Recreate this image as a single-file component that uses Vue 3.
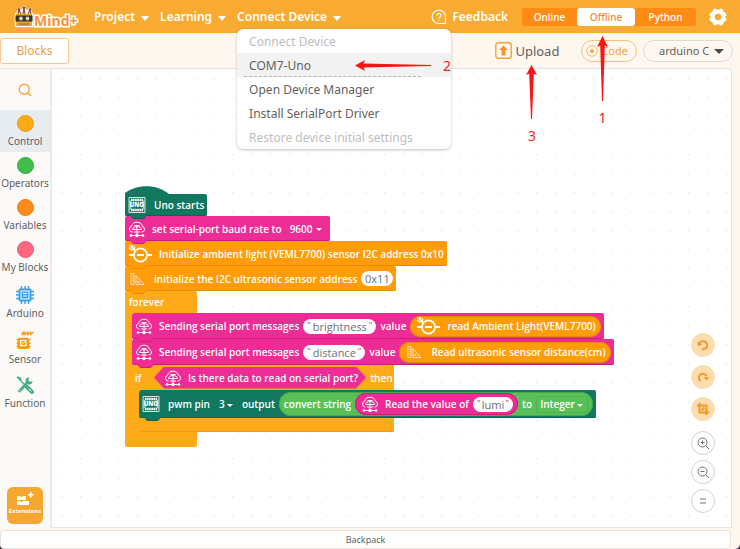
<script setup>
import { ref } from 'vue'

const mode = ref('Offline')
const modes = ['Online', 'Offline', 'Python']
const baud = ref('9600')
const pin = ref('3')
const castType = ref('Integer')
const language = ref('arduino C')
const address = ref('0x11')
const firstKey = ref('brightness')
const secondKey = ref('distance')
const readKey = ref('lumi')

const categories = [
  { name: 'Control', tone: 'amber' },
  { name: 'Operators', tone: 'green' },
  { name: 'Variables', tone: 'orange' },
  { name: 'My Blocks', tone: 'rose' },
]
</script>

<template>
  <div class="app">
    <svg class="defs" aria-hidden="true">
      <symbol id="i-iot" viewBox="0 0 18 18">
        <g fill="none" stroke="#fff" stroke-width="1">
          <path d="M4.500 12H3.800a2.900 2.900 0 0 1-.3-5.600A5.700 5.700 0 0 1 14.500 6.400 2.900 2.900 0 0 1 14.200 12h-.7" />
          <path d="M4.500 9.500c0-4 9-4 9 0zM6.500 5.500h5M9 5.500v6M6 12h6" />
          <path d="M9 12v3.500M3 15.500h12" />
        </g>
        <g fill="#fff"><circle cx="9" cy="15.500" r="1.700" /><circle cx="3" cy="15.500" r="1.300" /><circle cx="15" cy="15.500" r="1.300" /></g>
      </symbol>
      <symbol id="i-board" viewBox="0 0 18 18">
        <path d="M1 1.500h16v15H1z" fill="none" stroke="#fff" stroke-width="1" opacity=".8" />
        <path d="M3 4h12M3 14h12" stroke="#fff" stroke-width="2.400" stroke-dasharray="1.600 .5" />
        <path d="M1.500 4.500h2v9h-2zM14.500 4.500h2v9h-2z" fill="#fff" opacity=".6" />
      </symbol>
      <symbol id="i-light" viewBox="0 0 24 20">
        <g fill="none" stroke="#fff">
          <circle cx="12.500" cy="11" r="6.600" stroke-width="1.800" />
          <path d="M1 11h5M19 11h5M9 11h7" stroke-width="1.800" />
          <path d="M1.500 1.500l5 4.500M6.500 2.500V6H3M3.500 1l2 2M1 4l2 1.500" stroke-width="1.200" />
        </g>
      </symbol>
      <symbol id="i-ruler" viewBox="0 0 18 16">
        <g fill="none" stroke="#ffe2b5" stroke-width="1">
          <path d="M3 2.500h3v11H3zM4.500 5H6M4.500 7.500H6M4.500 10H6" />
          <path d="M8 4.500l8 9H8zM10 10l1.500 1.700H10z" />
        </g>
      </symbol>
    </svg>

    <header class="topbar">
      <svg class="logo" viewBox="0 0 68 24" role="img" aria-label="Mind+">
        <g stroke="#fff" stroke-width="2.500" stroke-linejoin="round" fill="#fff"><path d="M4 9h16v12H4zM6 8l1-4 3 4 2-6 2 6 4-4 1 4z" /></g>
        <path d="M4 9h16v12H4z" fill="#e9a52d" />
        <path d="M6 9l1-4 2 4M11 9l1-6 1 6M16 9l2-4 1 4" fill="none" stroke="#8d563a" stroke-width="1.300" />
        <circle cx="7" cy="4.500" r="1.300" fill="#7b4a38" /><circle cx="12" cy="2.800" r="1.400" fill="#7b4a38" /><circle cx="18" cy="4.500" r="1.300" fill="#7b4a38" />
        <path d="M3.500 10.500h17v6h-17z" fill="#38302c" /><circle cx="9" cy="13.500" r="1.900" fill="#d7d2b3" /><circle cx="15.500" cy="13.500" r="1.900" fill="#d7d2b3" />
        <path d="M7 19h10" stroke="#8d642a" />
        <text x="22" y="21" class="logo-text">Mind+</text>
      </svg>
      <nav class="menus">
        <button class="menu-btn">Project<i class="caret"></i></button>
        <button class="menu-btn">Learning<i class="caret"></i></button>
        <div class="menu-wrap">
          <button class="menu-btn" aria-expanded="true">Connect Device<i class="caret"></i></button>
          <div class="dropdown">
            <button class="entry" disabled>Connect Device</button>
            <button class="entry active">COM7-Uno</button>
            <button class="entry">Open Device Manager</button>
            <button class="entry">Install SerialPort Driver</button>
            <button class="entry" disabled>Restore device initial settings</button>
            <div class="mark mark-side">
              <svg width="76" height="11" viewBox="0 0 76 11"><path d="M0 5.500L10 0 8.500 3.500 76 5v1L8.500 7.500 10 11z" fill="#fb1414" /></svg>
              <span>2</span>
            </div>
          </div>
        </div>
      </nav>
      <button class="feedback">
        <svg width="16" height="16" viewBox="0 0 16 16" fill="none" stroke="#fff" stroke-width="1.200">
          <path d="M14.500 14.500H8A6.700 6.700 0 1 1 14.500 8z" />
          <path d="M6 6.500a2 2 0 1 1 2.800 1.800q-.8.400-.8 1.200M8 10.700v1.200" />
        </svg>
        Feedback
      </button>
      <div class="modes">
        <button v-for="m in modes" :key="m" class="mode" :class="{ on: m === mode }" @click="mode = m">{{ m }}</button>
        <div class="mark mark-up mark-mode">
          <svg width="11" height="65" viewBox="0 0 11 65"><path d="M5.500 0L11 11 7.800 9.500 6 65H5L3.200 9.500 0 11z" fill="#fb1414" /></svg>
          <span>1</span>
        </div>
      </div>
      <button class="gear" aria-label="Settings">
        <svg width="20" height="20" viewBox="0 0 20 20">
          <path fill-rule="evenodd" fill="#fff" d="M6.500 1.500Q8 1.500 10 3q2-1.500 3.500-1.500 2 .7 2 3.200 2.500 1 3 2.300Q19 8.500 17 10q2 1.500 1.500 3-.5 1.300-3 2.300 0 2.500-2 3.200Q12 18.500 10 17q-2 1.500-3.500 1.500-2-.7-2-3.200-2.500-1-3-2.300Q1 11.500 3 10 1 8.500 1.500 7q.5-1.300 3-2.300 0-2.500 2-3.200zM10 6.800a3.200 3.200 0 1 0 0 6.400 3.200 3.200 0 0 0 0-6.400z" />
        </svg>
      </button>
    </header>

    <div class="toolbar">
      <button class="tab">Blocks</button>
      <div class="tools">
        <div class="upload-wrap">
          <button class="upload">
            <svg width="17" height="17" viewBox="0 0 17 17"><rect x=".8" y=".8" width="15.400" height="15.400" rx="2.500" fill="none" stroke="#f2a33a" stroke-width="1.400" /><path d="M8.500 3.500L13 8h-2.500v5.500h-4V8H4z" fill="#f2952a" /></svg>
            Upload
          </button>
          <div class="mark mark-up mark-upload">
            <svg width="11" height="54" viewBox="0 0 11 65" preserveAspectRatio="none"><path d="M5.500 0L11 12 7.800 10.500 6 65H5L3.200 10.500 0 12z" fill="#fb1414" /></svg>
            <span>3</span>
          </div>
        </div>
        <button class="code">
          <svg width="12" height="12" viewBox="0 0 12 12"><circle cx="6" cy="6" r="5.200" fill="none" stroke="#f2b763" /><circle cx="6" cy="6" r="2" fill="#f2a33a" /></svg>
          Code
        </button>
        <span class="language">
          <select v-model="language" aria-label="Code language"><option>arduino C</option></select>
        </span>
      </div>
    </div>

    <main class="main">
      <aside class="sidebar">
        <button class="search" aria-label="Search blocks">
          <svg width="14" height="14" viewBox="0 0 14 14" fill="none" stroke="#f5a83a" stroke-width="1.400"><circle cx="6.300" cy="6.300" r="5" /><path d="M9.800 9.800l3.200 3.200" /></svg>
        </button>
        <button v-for="(c, i) in categories" :key="c.name" class="cat" :class="{ selected: i === 0 }">
          <i class="dot" :class="c.tone"></i>{{ c.name }}
        </button>
        <button class="cat tall">
          <svg width="18" height="18" viewBox="0 0 18 18" fill="none" stroke="#39a0f4"><path d="M5.500 0v18M9 0v18M12.500 0v18M0 5.500h18M0 9h18M0 12.500h18" stroke-width="1.400" /><rect x="3" y="3" width="12" height="12" rx="1" fill="#39a0f4" /><rect x="5" y="5" width="8" height="8" fill="#39a0f4" stroke="#fff" /><path d="M7 7.500h4M7 10h4" stroke="#fff" /></svg>
          Arduino
        </button>
        <button class="cat tall">
          <svg width="18" height="19" viewBox="0 0 18 20"><path d="M5 4l2-3v3l2-3v3l3-3v3l3-3v3l3-3" fill="none" stroke="#fa9a1c" stroke-width="1.200" /><path d="M0 9h15M0 13h15M0 16.500h15" stroke="#fa9a1c" stroke-width="1.200" /><rect x="1" y="7" width="12.500" height="12" rx="2" fill="#fa9a1c" /><rect x="4.500" y="10" width="5.500" height="5.500" fill="none" stroke="#fff" stroke-width="1.200" /><path d="M6 14l3-3" stroke="#fff" /></svg>
          Sensor
        </button>
        <button class="cat tall">
          <svg width="18" height="18" viewBox="0 0 18 18" fill="none" stroke="#45b183"><path d="M2 2l9 9" stroke-width="1.400" /><path d="M1 1l3 1 .8 2.500" stroke-width="1.800" /><path d="M11 11l5 5" stroke-width="4" stroke-linecap="round" /><path d="M12 6l-8.500 9" stroke-width="3" stroke-linecap="round" /><path d="M13.500 1.500a3.500 3.500 0 1 0 3 3.500l-2.500 1-2-2z" fill="#45b183" stroke="none" /><path d="M12.800 12.800l2.500 2.500M3.500 14.800l1-1" stroke="#fff" /></svg>
          Function
        </button>
        <button class="extensions">
          <svg width="18" height="14" viewBox="0 0 18 14" fill="#fff"><path d="M1 4h3l1 1h1l1-1h3v4H1zM1 9h3l1 1h1l1-1h6v4H1zM14 0h1.500v2h2v1.500h-2v2H14v-2h-2V2h2z" /></svg>
          Extensions
        </button>
      </aside>

      <section class="canvas" aria-label="Script area">
        <div class="script">
          <div class="block teal hat">
            <svg class="hat-cap" width="44" height="9" viewBox="0 0 44 9"><path d="M0 9V7C12-2.300 32-2.300 44 8v1z" fill="#11775f" /></svg>
            <span class="board"><svg><use href="#i-board" /></svg><b>UNO</b></span>
            <span class="indent">Uno starts</span>
          </div>
          <div class="block pink">
            <svg class="ic"><use href="#i-iot" /></svg>
            <span>set serial-port baud rate to</span>
            <span class="pick"><select v-model="baud" aria-label="Baud rate"><option>9600</option></select></span>
          </div>
          <div class="block orange">
            <svg class="ic wide"><use href="#i-light" /></svg>
            <span>Initialize ambient light (VEML7700) sensor I2C address 0x10</span>
          </div>
          <div class="block orange">
            <svg class="ic"><use href="#i-ruler" /></svg>
            <span class="indent">initialize the I2C ultrasonic sensor address</span>
            <input v-model="address" class="field address" aria-label="Sensor address" />
          </div>
          <div class="loop">
            <div class="loop-head">forever</div>
            <div class="loop-body">
              <div class="block pink nested">
                <svg class="ic"><use href="#i-iot" /></svg>
                <span>Sending serial port messages</span>
                <label class="quoted"><i>"</i><input v-model="firstKey" class="w-long" aria-label="First message" /><i>"</i></label>
                <span>value</span>
                <div class="reporter orange"><svg class="ic wide"><use href="#i-light" /></svg><span>read Ambient Light(VEML7700)</span></div>
              </div>
              <div class="block pink nested">
                <svg class="ic"><use href="#i-iot" /></svg>
                <span>Sending serial port messages</span>
                <label class="quoted"><i>"</i><input v-model="secondKey" class="w-mid" aria-label="Second message" /><i>"</i></label>
                <span>value</span>
                <div class="reporter orange"><svg class="ic"><use href="#i-ruler" /></svg><span class="indent">Read ultrasonic sensor distance(cm)</span></div>
              </div>
              <div class="branch">
                <div class="branch-head">
                  <span class="if">if</span>
                  <div class="hex"><svg class="ic"><use href="#i-iot" /></svg><span>Is there data to read on serial port?</span></div>
                  <span>then</span>
                </div>
                <div class="branch-body">
                  <div class="block teal pwm">
                    <span class="board"><svg><use href="#i-board" /></svg><b>UNO</b></span>
                    <span class="indent">pwm pin</span>
                    <span class="pick"><select v-model="pin" class="short" aria-label="Pin"><option>3</option></select></span>
                    <span>output</span>
                    <div class="reporter green">
                      <span>convert string</span>
                      <div class="reporter pink inner">
                        <svg class="ic"><use href="#i-iot" /></svg>
                        <span>Read the value of</span>
                        <label class="quoted"><i>"</i><input v-model="readKey" class="w-short" aria-label="Value name" /><i>"</i></label>
                      </div>
                      <span>to</span>
                      <span class="pick"><select v-model="castType" class="long" aria-label="Type"><option>Integer</option></select></span>
                    </div>
                  </div>
                </div>
                <div class="branch-foot"></div>
              </div>
            </div>
            <div class="loop-foot"></div>
          </div>
        </div>

        <div class="controls">
          <button class="round warm" aria-label="Undo"><svg viewBox="0 0 12 12"><path d="M2.500 4.500A4 4 0 1 1 5 10" /><path d="M.5 2.500l.5 4.500 4.500-1.500z" fill="#f09a25" stroke="none" /></svg></button>
          <button class="round warm" aria-label="Redo"><svg viewBox="0 0 12 12"><path d="M3.500 10A4 4 0 1 1 9.500 5" /><path d="M6.500 6h5.500L9.500 9.500z" fill="#f09a25" stroke="none" /></svg></button>
          <button class="round warm" aria-label="Screenshot"><svg viewBox="0 0 12 12"><path d="M2.500 0v9.500H12M0 2.500h9.500V12M4.500 7.500l3-3" /></svg></button>
          <div class="zooms">
            <button class="round" aria-label="Zoom in"><svg viewBox="0 0 12 12"><circle cx="5.500" cy="5.500" r="4.500" /><path d="M9 9l3 3M3.500 5.500h4M5.500 3.500v4" /></svg></button>
            <button class="round" aria-label="Zoom out"><svg viewBox="0 0 12 12"><circle cx="5.500" cy="5.500" r="4.500" /><path d="M9 9l3 3M3.500 5.500h4" /></svg></button>
            <button class="round" aria-label="Reset zoom"><svg viewBox="0 0 12 12"><path d="M3 4h6M3 8h6" /></svg></button>
          </div>
        </div>
      </section>
    </main>

    <button class="backpack">Backpack</button>
  </div>
</template>

<style>
body {
  background: #3b2537;
}
</style>

<style scoped>
* {
  box-sizing: border-box;
}
.app {
  display: flex;
  flex-direction: column;
  min-height: 100vh;
  background: #fef7ef;
  border-radius: 0 0 5px 5px;
  font-family: "Noto Sans", "Open Sans", sans-serif;
  color: #5f5f5f;
}
button,
input,
select {
  font: inherit;
  color: inherit;
  margin: 0;
  padding: 0;
  border: 0;
  background: none;
}
i {
  font-style: normal;
}
svg {
  flex: none;
  display: block;
}
.defs {
  position: absolute;
  width: 0;
  height: 0;
}

/* top bar */
.topbar {
  display: flex;
  align-items: center;
  height: 33px;
  padding: 0 12px;
  background: #f8aa31;
  color: #fff;
  font-size: 12px;
  font-weight: 600;
}
.logo {
  width: 68px;
  height: 24px;
}
.logo-text {
  font-family: "Open Sans", sans-serif;
  font-size: 14px;
  font-weight: 700;
  fill: #f5923a;
  stroke: #fff;
  stroke-width: 3px;
  paint-order: stroke;
}
.menus {
  display: flex;
  gap: 11px;
  padding-left: 14px;
}
.menu-btn {
  display: flex;
  align-items: center;
  gap: 6px;
  white-space: nowrap;
}
.caret {
  border: 4px solid transparent;
  border-top: 5px solid #fff;
  border-bottom: 0;
  margin-top: 4px;
}
.menu-wrap {
  position: relative;
}
.dropdown {
  position: absolute;
  z-index: 5;
  top: 21px;
  left: 0;
  display: flex;
  flex-direction: column;
  width: 214px;
  background: #fff;
  border-radius: 6px;
  box-shadow: 0 1px 3px rgba(0, 0, 0, 0.25);
  color: #5f5f5f;
  font-size: 12px;
  font-weight: 400;
}
.entry {
  height: 24px;
  padding: 0 12px;
  text-align: left;
}
.entry:disabled {
  color: #bdbdbd;
}
.entry.active {
  position: relative;
  background: #f2f2f2;
}
.entry.active::after {
  content: "";
  position: absolute;
  right: 30px;
  bottom: 0;
  left: 7px;
  border-bottom: 1px dashed #b5b5b5;
}
.mark {
  position: absolute;
  z-index: 6;
  display: flex;
  align-items: center;
  color: #ee2424;
  font-size: 14px;
  font-weight: 400;
  pointer-events: none;
}
.mark-side {
  top: 27px;
  right: 0;
  gap: 12px;
}
.mark-up {
  flex-direction: column;
  gap: 7px;
}
.feedback {
  display: flex;
  align-items: center;
  gap: 5px;
  margin-left: auto;
}
.modes {
  position: relative;
  display: grid;
  grid-template-columns: 55px 58px 61px;
  height: 18px;
  margin-left: 14px;
  border-radius: 3px;
  background: #ff8b15;
  font-size: 10px;
  font-weight: 500;
}
.mode.on {
  background: #fff;
  color: #f58a3c;
  border-radius: 3px;
}
.mark-mode {
  top: 28px;
  left: 75px;
}
.gear {
  margin-left: 12px;
}

/* toolbar */
.toolbar {
  display: flex;
  align-items: center;
  justify-content: space-between;
  height: 35px;
  padding-right: 7px;
}
.tab {
  width: 69px;
  height: 26px;
  border: 1px solid #f7c88c;
  border-radius: 3px;
  background: #fff;
  color: #f0a040;
  font-size: 12px;
}
.tools {
  display: flex;
  align-items: center;
}
.upload-wrap {
  position: relative;
}
.upload {
  display: flex;
  align-items: center;
  gap: 3px;
  font-size: 13px;
}
.mark-upload {
  top: 23px;
  left: 31px;
}
.code {
  display: flex;
  align-items: center;
  gap: 3px;
  height: 22px;
  margin: 0 6px 0 22px;
  padding: 0 8px 0 4px;
  border: 1px solid #f5c27c;
  border-radius: 11px;
  color: #f0a846;
  font-size: 11px;
}
.language {
  position: relative;
}
.language select {
  appearance: none;
  display: block;
  width: 90px;
  height: 22px;
  padding-left: 15px;
  border: 1px solid #dcdad6;
  border-radius: 11px;
  font-size: 11px;
}
.language::after {
  content: "";
  position: absolute;
  top: 9px;
  right: 9px;
  border: 5px solid transparent;
  border-top-color: #4d4d4d;
  border-bottom: 0;
  pointer-events: none;
}

/* sidebar */
.main {
  display: flex;
  flex: 1;
  padding-right: 8px;
}
.sidebar {
  display: flex;
  flex-direction: column;
  width: 52px;
  padding-bottom: 4px;
  background: #fcfaf8;
  border-top: 1px solid #eee9e4;
  border-right: 2px solid #ecebea;
}
.search {
  display: flex;
  align-items: center;
  justify-content: center;
  height: 41px;
}
.cat {
  display: flex;
  flex-direction: column;
  align-items: center;
  gap: 2px;
  height: 42px;
  padding-top: 5px;
  font-size: 10px;
  line-height: 14px;
  white-space: nowrap;
}
.cat.selected {
  background: #e7ecf0;
}
.cat.tall {
  height: 45px;
  padding-top: 8px;
}
.dot {
  width: 17px;
  height: 17px;
  border-radius: 50%;
}
.amber { background: #ffab19; border: 1px solid #e59a17; }
.dot.green { background: #40bf4a; border: 1px solid #36a23e; }
.dot.orange { background: #ff8c1a; border: 1px solid #e57c14; }
.rose { background: #ff6680; border: 1px solid #ee5873; }
.extensions {
  display: flex;
  flex-direction: column;
  align-items: center;
  gap: 1px;
  width: 36px;
  height: 37px;
  margin: auto auto 0;
  padding-top: 5px;
  border-radius: 6px;
  background: #f5a72f;
  color: #fff;
  font-family: "Open Sans", sans-serif;
  font-size: 6px;
  font-weight: 700;
}

/* canvas and script */
.canvas {
  position: relative;
  flex: 1;
  border: 1px solid #e6e4e2;
  border-left: 0;
  border-top-right-radius: 4px;
  background: #fff radial-gradient(circle, #f1f1f1 1px, transparent 1px) 0 0 / 19px 19px;
}
.script {
  position: absolute;
  top: 125px;
  left: 73px;
  display: flex;
  flex-direction: column;
  align-items: flex-start;
  color: #fff;
  font-family: "Open Sans", "Noto Sans", sans-serif;
  font-size: 10px;
  font-weight: 600;
  line-height: 14px;
  white-space: nowrap;
}
.block {
  position: relative;
  display: flex;
  align-items: center;
  gap: 4px;
  height: 25px;
  padding: 0 3px;
  border-radius: 2px;
  box-shadow: inset 0 -1px 0 var(--edge);
}
.block::after {
  content: "";
  position: absolute;
  z-index: 1;
  top: 100%;
  left: 6px;
  width: 15px;
  height: 3px;
  margin-top: -1px;
  background: var(--fill);
  border-bottom: 1px solid var(--edge);
  border-radius: 0 0 5px 5px;
}
.block,
.reporter {
  background: var(--fill);
}
.teal { --fill: #11775f; --edge: #0c6450; }
.pink { --fill: #ee2c95; --edge: #d01c7d; }
.block.orange,
.reporter.orange { --fill: #ff9c07; --edge: #e58a04; }
.reporter.green { --fill: #59c059; --edge: #46a846; }
.block.hat {
  height: 22px;
}
.block.nested {
  height: 26px;
}
.block.pwm {
  height: 28px;
}
.hat-cap {
  position: absolute;
  left: 0;
  bottom: 100%;
  margin-bottom: -1px;
}
.ic {
  width: 18px;
  height: 18px;
  margin-right: 2px;
}
.ic.wide {
  width: 24px;
  height: 20px;
  margin-right: 3px;
}
.board {
  display: grid;
  place-items: center;
  width: 18px;
  height: 18px;
  margin-right: 2px;
}
.board > * {
  grid-area: 1 / 1;
}
.board svg {
  width: 18px;
  height: 18px;
}
.board b {
  font-size: 6px;
  line-height: 8px;
}
.indent {
  margin-left: 2px;
}
.pick {
  position: relative;
  display: flex;
}
.pick select {
  appearance: none;
  width: 41px;
  height: 17px;
  padding-left: 4px;
}
.pick select.short {
  width: 24px;
  padding-left: 5px;
}
.pick select.long {
  width: 52px;
  padding-left: 3px;
  border: 1px solid #4fb04f;
  border-radius: 3px;
}
.pick::after {
  content: "";
  position: absolute;
  top: 8px;
  right: 5px;
  border: 3px solid transparent;
  border-top-color: #fff;
  border-bottom: 0;
  pointer-events: none;
}
.field,
.quoted {
  height: 15px;
  border-radius: 8px;
  background: #fff;
  color: #6b7079;
  font-weight: 400;
}
.address {
  width: 32px;
  text-align: center;
  font-size: 11px;
}
.quoted {
  display: flex;
  align-items: center;
  gap: 1px;
  padding: 0 4px;
}
.quoted i {
  color: #b5482f;
  font-size: 9px;
}
.quoted input {
  height: 15px;
  font-size: 11px;
  text-align: center;
}
.w-long { width: 56px; }
.w-mid { width: 45px; }
.w-short { width: 23px; }
.reporter {
  display: flex;
  align-items: center;
  gap: 4px;
  height: 21px;
  padding: 0 5px 0 6px;
  border-radius: 12px;
  box-shadow: inset 0 0 0 1px var(--edge);
}
.reporter.green {
  height: 24px;
  padding-left: 5px;
}
.reporter.inner {
  height: 22px;
}
.loop {
  display: flex;
  flex-direction: column;
  align-items: flex-start;
  border-left: 7px solid #ffab19;
  border-radius: 2px;
}
.loop-head {
  width: 72px;
  height: 22px;
  margin-left: -7px;
  padding: 4px 4px 0;
  background: #ffab19;
  border-radius: 2px 2px 0 0;
}
.loop-foot {
  width: 65px;
  height: 15px;
  background: #ffab19;
  border-radius: 0 0 2px 0;
}
.loop-body {
  display: flex;
  flex-direction: column;
  align-items: flex-start;
}
.branch {
  border-left: 7px solid #ffab19;
}
.branch-head {
  display: flex;
  align-items: center;
  gap: 4px;
  width: 262px;
  height: 25px;
  margin-left: -7px;
  padding-left: 3px;
  background: #ffab19;
}
.if {
  flex: none;
  width: 15px;
}
.hex {
  display: flex;
  flex: none;
  align-items: center;
  gap: 4px;
  height: 22px;
  padding: 0 8px 0 10px;
  background: #ee2c95;
  clip-path: polygon(10px 0, calc(100% - 10px) 0, 100% 50%, calc(100% - 10px) 100%, 10px 100%, 0 50%);
}
.branch-foot {
  width: 255px;
  height: 14px;
  background: #ffab19;
  border-bottom: 1px solid #ee9d18;
}

/* canvas controls */
.controls {
  position: absolute;
  right: 16px;
  bottom: 14px;
  display: flex;
  flex-direction: column;
  gap: 8px;
}
.zooms {
  display: flex;
  flex-direction: column;
  gap: 5px;
  padding-top: 2px;
}
.round {
  display: flex;
  align-items: center;
  justify-content: center;
  width: 24px;
  height: 24px;
  border: 1px solid #cfd1d6;
  border-radius: 50%;
  background: #fff;
}
.round svg {
  width: 12px;
  height: 12px;
  fill: none;
  stroke: #6e7178;
  stroke-width: 1;
}
.round.warm {
  background: #fddcae;
  border-color: #fddcae;
}
.round.warm svg {
  stroke: #f09a25;
  stroke-width: 2;
}
.backpack {
  height: 19px;
  margin: 2px 9px 0 0;
  border: 1px solid #e6e2df;
  border-radius: 4px;
  background: #fff;
  font-size: 9px;
}
</style>
